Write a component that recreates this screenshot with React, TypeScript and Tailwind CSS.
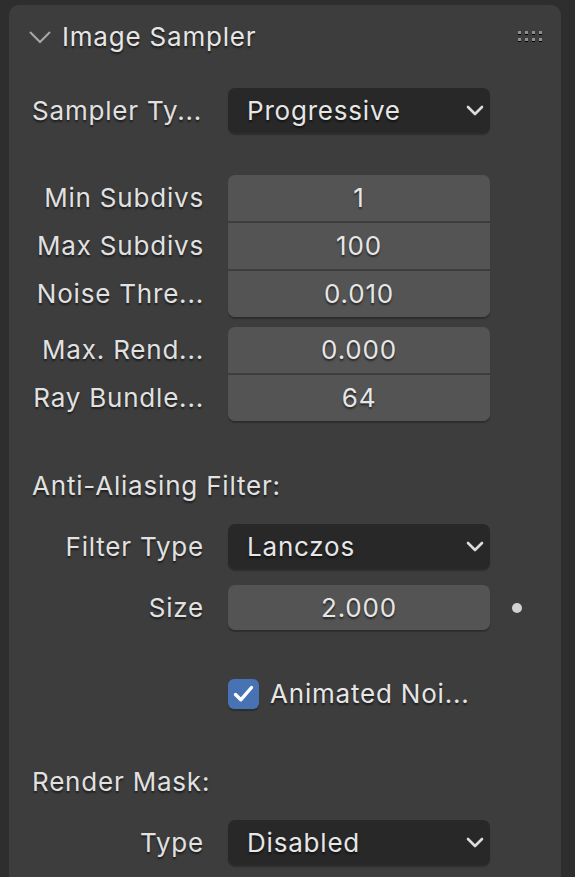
import { ReactNode } from 'react';

const textShadow = '[text-shadow:0_2px_2px_rgba(0,0,0,0.55)]';

function MenuChevron() {
  return (
    <svg width="18" height="11" viewBox="0 0 18 11" className="shrink-0">
      <path d="M2 2 L9 9 L16 2" fill="none" stroke="#dcdcdc" strokeWidth="2.6" strokeLinecap="round" strokeLinejoin="round" />
    </svg>
  );
}

function Dropdown({ value }: { value: string }) {
  return (
    <div className="w-[262px] h-[45px] bg-[#282828] rounded-[7px] shadow-[0_2px_1px_rgba(0,0,0,0.25)] flex items-center justify-between pl-[19px] pr-[6px]">
      <span className={`text-[#e6e6e6] ${textShadow}`}>{value}</span>
      <MenuChevron />
    </div>
  );
}

function Label({ children }: { children: ReactNode }) {
  return (
    <div className={`w-[172px] text-right text-[#e1e1e1] whitespace-nowrap ${textShadow}`}>{children}</div>
  );
}

function Row({ label, children, extra }: { label: string; children: ReactNode; extra?: ReactNode }) {
  return (
    <div className="flex items-center">
      <Label>{label}</Label>
      <div className="ml-[24px]">{children}</div>
      {extra}
    </div>
  );
}

function NumberGroup({ rows }: { rows: { label: string; value: string }[] }) {
  return (
    <div className="flex">
      <div className="flex flex-col gap-[2px]">
        {rows.map((r) => (
          <div key={r.label} className="h-[46px] flex items-center">
            <Label>{r.label}</Label>
          </div>
        ))}
      </div>
      <div className="ml-[24px] w-[262px] flex flex-col gap-[2px] rounded-[7px] shadow-[0_2px_1px_rgba(0,0,0,0.25)]">
        {rows.map((r, i) => (
          <div
            key={r.label}
            className={`h-[46px] bg-[#545454] flex items-center justify-center text-[#e6e6e6] ${textShadow} ${
              i === 0 ? 'rounded-t-[7px]' : ''
            } ${i === rows.length - 1 ? 'rounded-b-[7px]' : ''}`}
          >
            {r.value}
          </div>
        ))}
      </div>
    </div>
  );
}

function GripDots() {
  const cols = [0, 7, 14, 21];
  const rows = [0, 7];
  return (
    <svg width="25" height="13" viewBox="0 0 25 13">
      {rows.map((y) =>
        cols.map((x) => (
          <g key={`${x}-${y}`}>
            <rect x={x} y={y + 2} width="3" height="2" fill="#000" />
            <rect x={x} y={y} width="3" height="3" fill="#8e8e8e" />
          </g>
        ))
      )}
    </svg>
  );
}

export default function App() {
  return (
    <div className="w-[575px] h-[877px] bg-[#2e2e2e] pt-[5px] pl-[9px] overflow-hidden font-['Inter','Noto_Sans',sans-serif] text-[26px] tracking-[0.8px] leading-none">
      <div className="w-[552px] h-[900px] bg-[#3d3d3d] rounded-t-[10px] pl-[23px]">
        {/* header */}
        <div className="h-[64px] flex items-center -ml-[4px] pr-[18px]">
          <svg width="24" height="14" viewBox="0 0 24 14" className="shrink-0">
            <path d="M2 2 L12 12 L22 2" fill="none" stroke="#a8a8a8" strokeWidth="2" />
          </svg>
          <span className={`ml-[10px] text-[#e6e6e6] ${textShadow}`}>Image Sampler</span>
          <div className="ml-auto">
            <GripDots />
          </div>
        </div>

        <div className="mt-[19px] flex items-center">
          <div className={`w-[172px] text-left text-[#e1e1e1] whitespace-nowrap ${textShadow}`}>Sampler Ty...</div>
          <div className="ml-[24px]">
            <Dropdown value="Progressive" />
          </div>
        </div>

        <div className="mt-[42px]">
          <NumberGroup
            rows={[
              { label: 'Min Subdivs', value: '1' },
              { label: 'Max Subdivs', value: '100' },
              { label: 'Noise Thre...', value: '0.010' },
            ]}
          />
        </div>

        <div className="mt-[10px]">
          <NumberGroup
            rows={[
              { label: 'Max. Rend...', value: '0.000' },
              { label: 'Ray Bundle...', value: '64' },
            ]}
          />
        </div>

        <div className={`mt-[45px] h-[40px] flex items-center text-[#e1e1e1] ${textShadow}`}>Anti-Aliasing Filter:</div>

        <div className="mt-[18px]">
          <Row label="Filter Type">
            <Dropdown value="Lanczos" />
          </Row>
        </div>

        <div className="mt-[16px]">
          <Row
            label="Size"
            extra={<div className="ml-[22px] w-[10px] h-[10px] rounded-full bg-[#d2d2d2]" />}
          >
            <div className={`w-[262px] h-[45px] bg-[#545454] rounded-[7px] shadow-[0_2px_1px_rgba(0,0,0,0.25)] flex items-center justify-center text-[#e6e6e6] ${textShadow}`}>
              2.000
            </div>
          </Row>
        </div>

        <div className="mt-[49px] h-[30px] flex items-center ml-[196px]">
          <div className="w-[31px] h-[30px] rounded-[6px] bg-[#4772b3] shadow-[0_2px_1px_rgba(0,0,0,0.25)] flex items-center justify-center">
            <svg width="31" height="30" viewBox="0 0 31 30">
              <path d="M7.5 15.5 L12.8 20.8 L23.5 8.5" fill="none" stroke="#ffffff" strokeWidth="3.4" strokeLinecap="round" strokeLinejoin="round" />
            </svg>
          </div>
          <span className={`ml-[11px] text-[#e6e6e6] whitespace-nowrap ${textShadow}`}>Animated Noi...</span>
        </div>

        <div className={`mt-[53px] h-[40px] flex items-center text-[#e1e1e1] ${textShadow}`}>Render Mask:</div>

        <div className="mt-[18px]">
          <Row label="Type">
            <Dropdown value="Disabled" />
          </Row>
        </div>
      </div>
    </div>
  );
}
